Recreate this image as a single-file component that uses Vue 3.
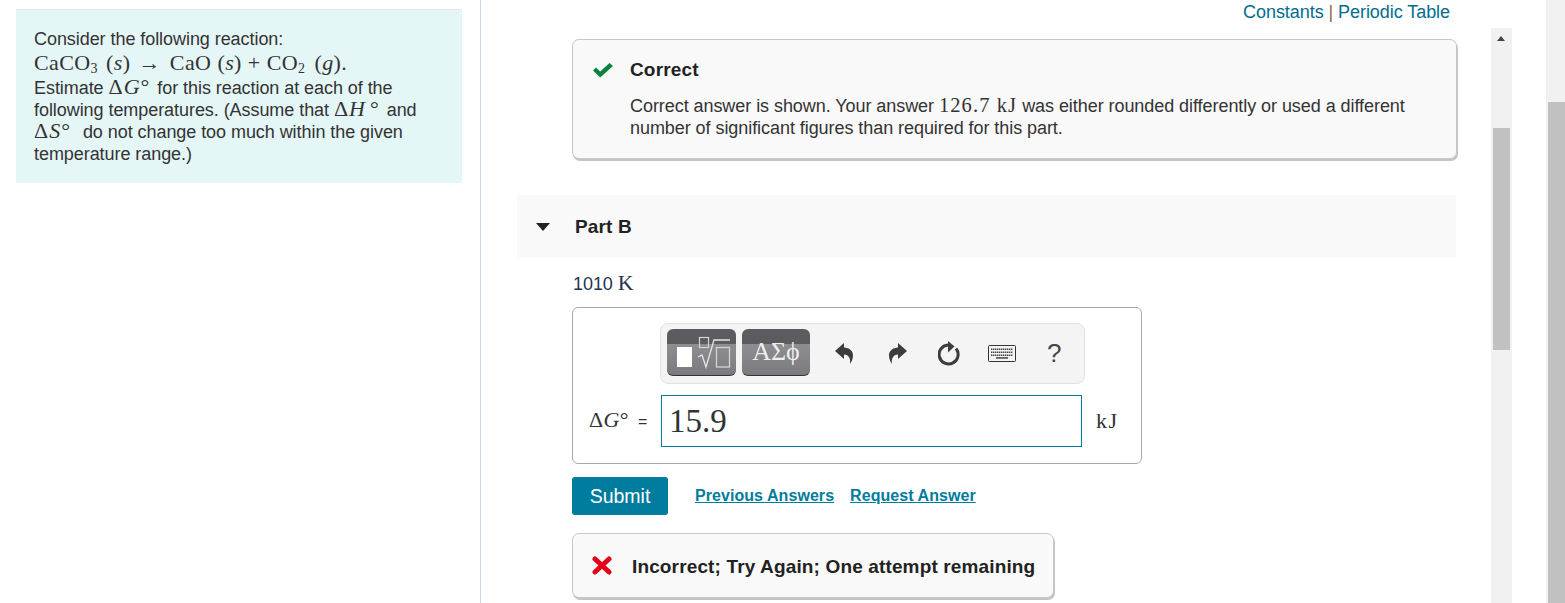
<script setup>
const keyDots = [0, 1, 2, 3, 4, 5, 6, 7, 8, 9, 10]
</script>

<template>
  <div class="page">
    <aside class="left">
      <div class="panel">
        <div class="ln">Consider the following reaction:</div>
        <div class="ln eq"><span class="m">CaCO<sub>3</sub><span class="g1">(<i>s</i>)</span><span class="g2">→</span><span class="g5">CaO</span><span class="g3">(<i>s</i>)</span><span class="g3">+</span><span class="g3">CO<sub>2</sub></span><span class="g4">(<i>g</i>).</span></span></div>
        <div class="ln">Estimate <span class="m d1">Δ<i>G</i>°</span> for this reaction at each of the</div>
        <div class="ln">following temperatures. (Assume that <span class="m">Δ<i>H</i><span class="deg">°</span></span> and</div>
        <div class="ln"><span class="m d2">Δ<i>S</i>°</span> do not change too much within the given</div>
        <div class="ln last">temperature range.)</div>
      </div>
    </aside>

    <main class="main">
      <div class="links">Constants <span class="pipe">|</span> Periodic Table</div>
      <div class="area">
        <div class="content">
          <section class="box correct">
            <div class="title">
              <svg class="mark" width="22" height="16" viewBox="0 0 22 16"><path d="M1 8.500 4 5.500 8.200 9.500 17.500 1 21 4 8.200 15.500Z" fill="#0a8043"/></svg>
              <span>Correct</span>
            </div>
            <div class="msg">
              <div>Correct answer is shown. Your answer <span class="m ans">126.7 kJ</span> was either rounded differently or used a different</div>
              <div>number of significant figures than required for this part.</div>
            </div>
          </section>

          <div class="part">
            <span class="tri"></span>
            <span class="part-name">Part B</span>
          </div>

          <div class="inner">
            <div class="temp">1010 <span class="m">K</span></div>

            <div class="mathbox">
              <div class="toolbar">
                <button class="tpl first">
                  <svg width="69" height="46" viewBox="0 0 69 46">
                    <rect x="10" y="18" width="15" height="20" fill="#fff"/>
                    <rect x="32.500" y="8.500" width="9" height="10" fill="none" stroke="#d4d4d4" stroke-width="1.200"/>
                    <path d="M31 28 35 26 39 38 47 11H63" fill="none" stroke="#e6e6e6" stroke-width="1.300"/>
                    <rect x="49.500" y="18.500" width="13" height="19.500" fill="none" stroke="#d4d4d4" stroke-width="1.300"/>
                  </svg>
                </button>
                <button class="tpl second">ΑΣϕ</button>

                <svg class="tool t-undo" width="20" height="24" viewBox="0 0 20 24"><path d="M1 9 10 1V5.500C15 5.500 19.500 9 19 14 18.800 17 17.500 20 16 22 16.800 17 15 12.500 10 12.500V17Z" fill="#3c3c3c"/></svg>
                <svg class="tool t-redo" width="20" height="24" viewBox="0 0 20 24"><path d="M19 9 10 1V5.500C5 5.500 .5 9 1 14 1.200 17 2.500 20 4 22 3.200 17 5 12.500 10 12.500V17Z" fill="#3c3c3c"/></svg>
                <svg class="tool t-reset" width="24" height="26" viewBox="0 0 24 26"><path d="M18 7.500A9.500 9.500 0 1 1 10 4" fill="none" stroke="#3c3c3c" stroke-width="3"/><path d="M10 0 16.500 5.500 10 11.500Z" fill="#3c3c3c"/></svg>
                <svg class="tool t-keys" width="28" height="17" viewBox="0 0 28 17">
                  <rect x=".5" y=".5" width="27" height="16" rx="1" fill="#f4f4f4" stroke="#333"/>
                  <g fill="#444">
                    <rect v-for="i in keyDots" :key="'a' + i" :x="3 + i * 2" y="3.500" width="1.400" height="1.500"/>
                    <rect v-for="i in keyDots" :key="'b' + i" :x="3 + i * 2" y="6.500" width="1.400" height="1.500"/>
                    <rect v-for="i in keyDots" :key="'c' + i" :x="3 + i * 2" y="9.500" width="1.400" height="1.500"/>
                    <rect x="8" y="12.200" width="12" height="1.500"/>
                  </g>
                </svg>
                <span class="help">?</span>
              </div>

              <div class="entry">
                <span class="label"><span class="m lab">Δ<i>G</i>°</span><span class="eqs">=</span></span>
                <div class="input">15.9</div>
                <span class="m unit">kJ</span>
              </div>
            </div>

            <div class="actions">
              <button class="submit">Submit</button>
              <a class="lnk">Previous Answers</a>
              <a class="lnk">Request Answer</a>
            </div>

            <section class="box wrong">
              <svg class="xmark" width="20" height="19" viewBox="0 0 20 19"><path d="M3 3 17 16M17 3 3 16" stroke="#e2001a" stroke-width="5" stroke-linecap="round" fill="none"/></svg>
              <span class="wrong-text">Incorrect; Try Again; One attempt remaining</span>
            </section>
          </div>
        </div>

        <div class="scroll inner-scroll">
          <span class="up"></span>
          <span class="thumb"></span>
        </div>
      </div>
    </main>

    <div class="scroll outer-scroll"><span class="thumb"></span></div>
  </div>
</template>

<style scoped>
.page {
  display: flex;
  width: 1565px;
  height: 603px;
  overflow: hidden;
  background: #fff;
  color: #333;
  font-family: "Liberation Sans", Arial, sans-serif;
  font-size: 18px;
  line-height: 22px;
  letter-spacing: -.06px;
}
.m { font-family: "Liberation Serif", "DejaVu Serif", serif; letter-spacing: 1px; }
.m i { font-style: italic; }
.m sub { font-size: 14px; line-height: 0; vertical-align: -3px; }

.left {
  flex: none;
  width: 446px;
  border-right: 1px solid #c5d6e6;
  padding: 9px 18px 0 16px;
}
.panel {
  box-sizing: border-box;
  height: 174px;
  border-top: 1px solid #dfe8e8;
  background: #e5f6f7;
  padding: 18px 18px 0;
}
.panel .ln { height: 22.250px; white-space: nowrap; }
.panel .m { font-size: 22px; }
.panel .eq { letter-spacing: .4px; margin: 2px 0 1px; }
.panel .last { margin-top: 1px; }
.eq .m { letter-spacing: .4px; }
.g1 { margin-left: 8px; }
.g2 { margin-left: 8px; }
.g5 { margin-left: 9px; }
.g3 { margin-left: 6px; }
.g4 { margin-left: 9px; }
.d1 { margin-right: 2px; }
.d2 { margin-right: 7px; }
.deg { margin: 0 2px 0 4px; }

.main { flex: 1; min-width: 0; display: flex; flex-direction: column; }
.links {
  height: 28px;
  box-sizing: border-box;
  padding: 1px 96px 0 0;
  text-align: right;
  color: #006d8f;
}
.pipe { color: #8a6a50; }
.area { flex: 1; display: flex; min-height: 0; }
.content { width: 1010px; flex: none; }

.box {
  box-sizing: border-box;
  background: #f9f9f9;
  border: 1px solid #c8c8c8;
  border-radius: 7px;
  box-shadow: 1px 2px 0 #c4c4c4;
}
.correct {
  margin: 11px 34px 0 91px;
  height: 120px;
  padding: 18px 18px 0 19px;
}
.title {
  display: flex;
  align-items: center;
  font-weight: 700;
  font-size: 19px;
  letter-spacing: .15px;
  color: #222;
  height: 24px;
}
.mark { margin-right: 16px; flex: none; }
.msg { margin: 12px 0 0 38px; white-space: nowrap; }
.ans { font-size: 20.500px; letter-spacing: 1.100px; }

.part {
  margin: 36px 35px 0 36px;
  height: 62px;
  box-sizing: border-box;
  padding: 2px 0 0 19px;
  background: #f9f9f9;
  display: flex;
  align-items: center;
}
.tri {
  width: 0;
  height: 0;
  border-left: 7.500px solid transparent;
  border-right: 7.500px solid transparent;
  border-top: 8px solid #222;
  margin-right: 25px;
}
.part-name { font-weight: 700; font-size: 19px; letter-spacing: .15px; color: #222; }

.inner { margin-left: 91px; }
.temp { margin: 15px 0 0 1px; height: 22px; color: #1f3450; }
.temp .m { font-size: 22px; letter-spacing: 0; }

.mathbox {
  margin-top: 13px;
  box-sizing: border-box;
  width: 570px;
  height: 157px;
  border: 1px solid #aaa;
  border-radius: 6px;
  padding-top: 15px;
}
.toolbar {
  box-sizing: border-box;
  margin-left: 87px;
  width: 425px;
  height: 61px;
  background: #f4f4f4;
  border: 1px solid #e2e2e2;
  border-radius: 8px;
  display: flex;
  align-items: center;
  padding: 0 0 2px 6px;
}
.tpl {
  height: 47px;
  padding: 0;
  border: 0;
  border-bottom: 1px solid #333;
  border-radius: 6px;
  background: linear-gradient(#5c5c60 0, #5c5c60 32%, #8d8d92 33%, #7a7a7f 100%);
  color: #eee;
  box-sizing: border-box;
  flex: none;
  display: block;
  overflow: hidden;
}
.first { width: 69px; margin-right: 6px; }
.second {
  width: 68px;
  font-family: "Liberation Serif", serif;
  font-size: 26px;
  letter-spacing: 0;
  text-align: center;
}
.tool { flex: none; margin-top: 2px; }
.t-undo { margin-left: 24px; }
.t-redo { margin-left: 34px; }
.t-reset { margin-left: 30px; }
.t-keys { margin-left: 26px; }
.help { margin-left: 31px; font-size: 26px; color: #444; }

.entry {
  display: flex;
  align-items: center;
  margin-top: 11px;
  padding-left: 16px;
}
.label { width: 72px; flex: none; white-space: nowrap; }
.lab { font-size: 22px; letter-spacing: .4px; }
.eqs { font-size: 16px; margin-left: 9px; }
.input {
  box-sizing: border-box;
  width: 421px;
  height: 52px;
  flex: none;
  border: 1px solid #007c9e;
  font-family: "Liberation Serif", serif;
  font-size: 33px;
  line-height: 50px;
  letter-spacing: 0;
  padding-left: 7px;
  color: #333;
}
.unit { margin-left: 14px; font-size: 22px; letter-spacing: 1.500px; }

.actions { display: flex; align-items: center; margin-top: 13px; height: 38px; }
.submit {
  box-sizing: border-box;
  width: 96px;
  height: 38px;
  border: 0;
  border-radius: 3px;
  background: #007c9e;
  color: #fff;
  font-family: "Liberation Sans", Arial, sans-serif;
  font-size: 19.500px;
  padding: 0;
  margin-right: 27px;
}
.lnk {
  color: #007c9e;
  font-weight: 700;
  font-size: 16px;
  letter-spacing: .06px;
  text-decoration: underline;
  margin-right: 16px;
}
.wrong {
  margin-top: 18px;
  width: 482px;
  height: 65px;
  display: flex;
  align-items: center;
  padding-left: 19px;
}
.xmark { margin-right: 20px; flex: none; }
.wrong-text { font-weight: 700; font-size: 19px; letter-spacing: .14px; color: #222; white-space: nowrap; padding-top: 3px; }

.scroll { box-sizing: border-box; background: #f1f1f1; flex: none; }
.thumb { display: block; background: #c1c1c1; }
.inner-scroll { width: 21px; padding: 0 2px; }
.up {
  display: block;
  width: 0;
  height: 0;
  margin: 8px 0 0 4px;
  border-left: 4.500px solid transparent;
  border-right: 4.500px solid transparent;
  border-bottom: 5px solid #444;
}
.inner-scroll .thumb { width: 17px; height: 222px; margin-top: 87px; }
.outer-scroll { width: 19px; padding: 102px 0 0 2px; }
.outer-scroll .thumb { width: 17px; height: 501px; }
</style>
